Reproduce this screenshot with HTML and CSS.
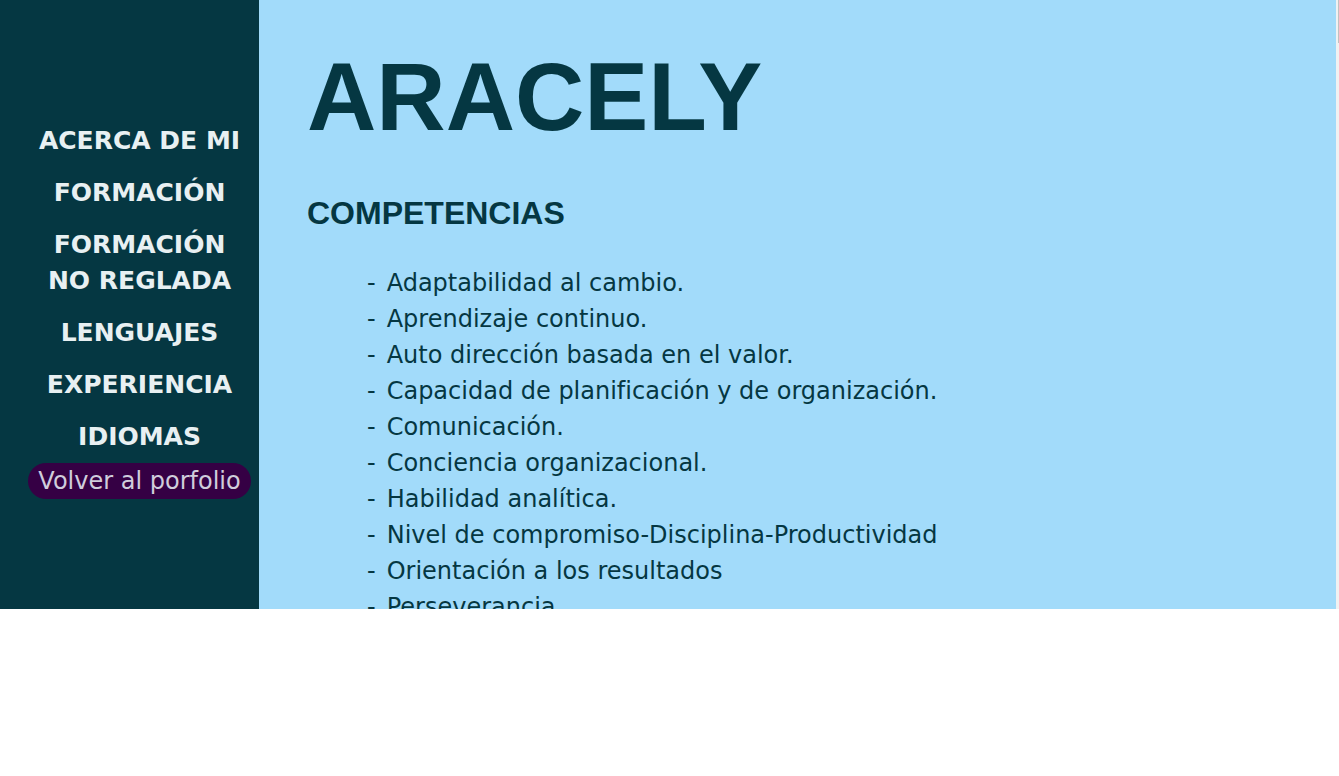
FILE: index.html
```html
<!DOCTYPE html>
<html lang="es">
<head>
<meta charset="utf-8">
<meta name="viewport" content="width=device-width, initial-scale=1">
<title>Aracely</title>
<link rel="stylesheet" href="styles.css">
</head>
<body>
<div class="page">
  <nav class="sidebar">
    <a class="nav-link" href="#acerca">ACERCA DE MI</a>
    <a class="nav-link" href="#formacion">FORMACIÓN</a>
    <a class="nav-link" href="#no-reglada">FORMACIÓN<br>NO REGLADA</a>
    <a class="nav-link" href="#lenguajes">LENGUAJES</a>
    <a class="nav-link" href="#experiencia">EXPERIENCIA</a>
    <a class="nav-link" href="#idiomas">IDIOMAS</a>
    <a class="back-link" href="#porfolio">Volver al porfolio</a>
  </nav>
  <main class="content" id="acerca">
    <h1 class="name">ARACELY</h1>
    <h2 class="section-title">COMPETENCIAS</h2>
    <ul class="skills">
      <li>Adaptabilidad al cambio.</li>
      <li>Aprendizaje continuo.</li>
      <li>Auto dirección basada en el valor.</li>
      <li>Capacidad de planificación y de organización.</li>
      <li>Comunicación.</li>
      <li>Conciencia organizacional.</li>
      <li>Habilidad analítica.</li>
      <li>Nivel de compromiso-Disciplina-Productividad</li>
      <li>Orientación a los resultados</li>
      <li>Perseverancia</li>
    </ul>
  </main>
  <div class="scrollbar"><div class="thumb"></div></div>
</div>
</body>
</html>
```
FILE: styles.css
```css
* { box-sizing: border-box; }
body {
  margin: 0;
  background: #fff;
  font: 24px/36px Verdana, "DejaVu Sans", sans-serif;
}
.page {
  display: flex;
  height: calc(100vh - 167px);
  overflow: hidden;
  background: #a2dbfa;
  color: #053742;
}
.sidebar {
  display: flex;
  flex-direction: column;
  align-items: center;
  justify-content: center;
  flex: 0 0 259px;
  padding: 4px 0 0 20px;
  background: #053742;
}
.nav-link {
  padding: 8px 0;
  color: #e8f0f2;
  font-size: 25px;
  font-weight: bold;
  text-align: center;
  text-decoration: none;
}
.back-link {
  padding: 0 10px;
  border-radius: 18px;
  background: #350044;
  color: #d0cddc;
  text-decoration: none;
}
.content {
  flex: 1;
  padding: 40px 48px 0;
}
.name {
  margin: 0;
  font: bold 96px/114px "Liberation Sans", Arial, sans-serif;
}
.section-title {
  margin: 41px 0 34px;
  font: bold 32px/36px "Liberation Sans", Arial, sans-serif;
}
.skills {
  margin: 0;
  padding: 0 0 0 60px;
  list-style: none;
}
.skills li::before {
  content: "-";
  margin-right: 11px;
}
.scrollbar {
  flex: 0 0 3px;
  padding-left: 2px;
  background: #f1f1f1;
}
.thumb {
  height: 43px;
  background: #c1c1c1;
}
```
